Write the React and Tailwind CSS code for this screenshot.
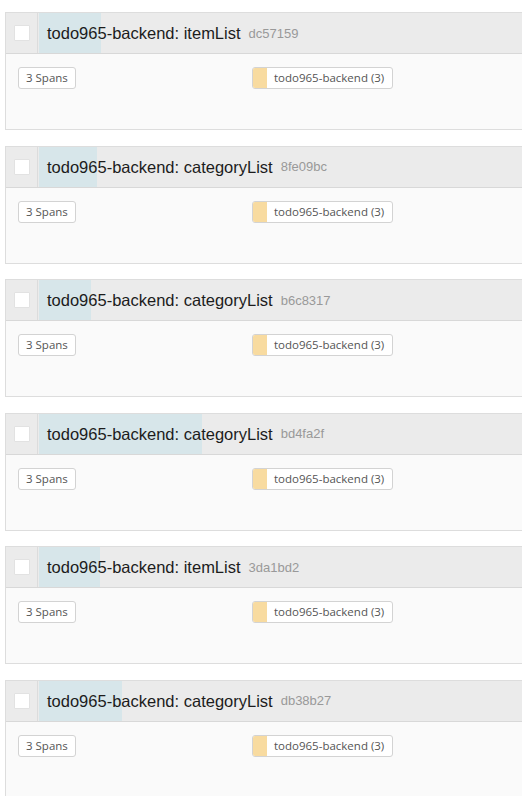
const traces = [
  { op: "itemList", id: "dc57159", hl: 62 },
  { op: "categoryList", id: "8fe09bc", hl: 58 },
  { op: "categoryList", id: "b6c8317", hl: 52 },
  { op: "categoryList", id: "bd4fa2f", hl: 163 },
  { op: "itemList", id: "3da1bd2", hl: 61 },
  { op: "categoryList", id: "db38b27", hl: 83 },
];

function TraceCard({ trace }) {
  return (
    <div className="ml-[5px] w-[530px] h-[118px] shrink-0 border border-[#dddddd] bg-[#fafafa] flex flex-col">
      <div className="relative h-[41px] shrink-0 flex items-stretch bg-[#ebebeb] border-b border-[#d8d8d8]">
        <div className="w-[32px] shrink-0 flex items-center justify-center border-r border-[#dcdcdc]">
          <div className="w-[16px] h-[16px] bg-white border border-[#e2e2e2] rounded-[1px]" />
        </div>
        <div
          className="absolute left-[33px] top-0 bottom-0 bg-[#d7e6ea]"
          style={{ width: trace.hl }}
        />
        <div className="relative flex items-center pl-[9px] pt-[1px] font-['Liberation_Sans',Arial,sans-serif]">
          <span className="text-[16.5px] text-[#1c1c1c]">todo965-backend: {trace.op}</span>
          <span className="ml-[8px] text-[13px] text-[#999999]">{trace.id}</span>
        </div>
      </div>
      <div className="grid grid-cols-[234px_auto] justify-start pl-[12px] pt-[13px] font-['Open_Sans',sans-serif] text-[11.5px] text-[#555555]">
        <div className="justify-self-start h-[22px] px-[7px] flex items-center border border-[#d3d3d3] rounded-[3px] bg-white">
          3 Spans
        </div>
        <div className="h-[22px] flex items-stretch border border-[#d3d3d3] rounded-[3px] bg-white overflow-hidden">
          <div className="w-[14px] bg-[#f8dba0]" />
          <div className="flex items-center pl-[7px] pr-[8px]">todo965-backend (3)</div>
        </div>
      </div>
    </div>
  );
}

export default function App() {
  return (
    <div className="w-[522px] h-[796px] overflow-hidden bg-white pt-[12px] flex flex-col gap-[15.5px]">
      {traces.map((t) => (
        <TraceCard key={t.id} trace={t} />
      ))}
    </div>
  );
}
